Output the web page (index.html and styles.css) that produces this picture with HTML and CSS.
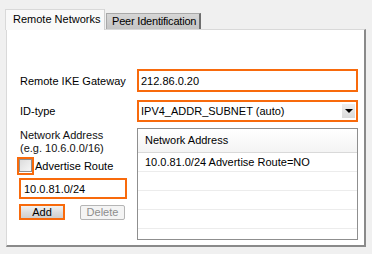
FILE: index.html
```html
<!DOCTYPE html>
<html lang="en">
<head>
  <meta charset="UTF-8" />
  <title>Remote Networks</title>
  <link rel="stylesheet" href="styles.css">
</head>
<body>

  <div class="tabs">
    <div class="tab active">Remote Networks</div>
    <div class="tab">Peer Identification</div>
  </div>

  <div class="panel">
    <div class="form">
      <div class="label">Remote IKE Gateway</div>
      <div class="field hl">212.86.0.20</div>

      <div class="label">ID-type</div>
      <div class="field hl select">
        <span>IPV4_ADDR_SUBNET (auto)</span>
        <span class="arrow"></span>
      </div>

      <div class="side">
        <div class="hint">Network Address<br>(e.g. 10.6.0.0/16)</div>
        <div class="check-row">
          <span class="hl-box"><span class="checkbox"></span></span>
          <span>Advertise Route</span>
        </div>
        <div class="field hl net">10.0.81.0/24</div>
        <div class="buttons">
          <span class="hl-btn"><button class="btn">Add</button></span>
          <button class="btn" disabled>Delete</button>
        </div>
      </div>

      <div class="list">
        <div class="list-head">Network Address</div>
        <div class="list-row">10.0.81.0/24 Advertise Route=NO</div>
        <div class="list-row"></div>
        <div class="list-row"></div>
        <div class="list-row"></div>
      </div>
    </div>
  </div>

</body>
</html>
```

FILE: styles.css
```css
/* Page */
body {
  margin: 0;
  background-color: #f0f0f0;
  font-family: "Liberation Sans", Arial, sans-serif;
  font-size: 11px;
  color: #000;
}

/* Tab strip */
.tabs {
  display: flex;
  align-items: flex-end;
  height: 20px;
  padding: 9px 0 0 5px;
}

.tab {
  box-sizing: border-box;
  height: 16px;
  width: 95px;
  padding-left: 5px;
  line-height: 14px;
  white-space: nowrap;
  letter-spacing: -0.2px;
  background: linear-gradient(#d6d6d6, #c4c4c4);
  border: 1px solid #a8a8a8;
  border-right: 2px solid #6e6e6e;
  border-bottom: none;
  margin-left: 1px;
}

.tab.active {
  position: relative;
  z-index: 1;
  height: 21px;
  width: 100px;
  padding-left: 7px;
  line-height: 19px;
  letter-spacing: 0;
  margin: 0 0 -1px 0;
  background: #f9f9f9;
  border: 1px solid #d9d9d9;
  border-right: 1px solid #d0d0d0;
  border-bottom: none;
}

/* Tab page */
.panel {
  box-sizing: border-box;
  width: 360px;
  height: 218px;
  margin-left: 6px;
  padding: 39px 0 0 13px;
  background-color: #fff;
  border-top: 1px solid #d9d9d9;
  border-left: 1px solid #d9d9d9;
  border-right: 2px solid #8a8a8a;
  border-bottom: 2px solid #8a8a8a;
}

.form {
  display: grid;
  grid-template-columns: 117px 221px;
  grid-template-rows: 23px 22px 112px;
  row-gap: 8px;
  align-items: center;
}

.form .side,
.form .list {
  align-self: start;
  margin-top: -2px;
}

/* Inputs */
.field {
  box-sizing: border-box;
  height: 100%;
  padding-left: 2px;
  display: flex;
  align-items: center;
  background-color: #fff;
}

.hl {
  border: 2px solid #f86a0c;
}

.select {
  justify-content: space-between;
}

.arrow {
  position: relative;
  width: 13px;
  height: 14px;
  margin-right: 1px;
  background: linear-gradient(#eeeeee, #dadada);
}

.arrow::after {
  content: "";
  position: absolute;
  left: 3px;
  top: 5px;
  border-left: 4px solid transparent;
  border-right: 4px solid transparent;
  border-top: 4px solid #000;
}

/* Left column under the fields */
.hint {
  line-height: 13px;
  margin-top: 1px;
  color: #111;
}

.check-row {
  display: flex;
  align-items: center;
  margin: 2px 0 0 -3px;
  height: 17px;
}

.hl-box {
  box-sizing: border-box;
  width: 17px;
  height: 18px;
  border: 2px solid #f86a0c;
  display: flex;
  align-items: center;
  justify-content: center;
  margin-right: 1px;
}

.checkbox {
  box-sizing: border-box;
  width: 13px;
  height: 13px;
  border: 1px solid #8e8f8f;
  background: linear-gradient(135deg, #dcdcdc, #f6f6f6);
}

.net {
  width: 108px;
  height: 21px;
  margin: 4px 0 0 -1px;
  padding-left: 3px;
}

.buttons {
  display: flex;
  align-items: center;
  margin: 5px 0 0 -1px;
}

.hl-btn {
  box-sizing: border-box;
  width: 46px;
  height: 16px;
  border: 2px solid #f86a0c;
  display: flex;
}

.btn {
  box-sizing: border-box;
  width: 45px;
  height: 15px;
  padding: 0;
  font-family: inherit;
  font-size: 11px;
  line-height: 11px;
  color: #000;
  background: linear-gradient(#f2f2f2, #dcdcdc 55%, #cfcfcf);
  border: 1px solid #a0a0a0;
  border-radius: 2px;
}

.hl-btn .btn {
  width: 100%;
  height: 100%;
  border: none;
  border-radius: 0;
}

.btn[disabled] {
  margin-left: 15px;
  color: #8d8d8d;
  background: #f4f4f4;
  border-color: #b5b5b5;
}

/* List view */
.list {
  box-sizing: border-box;
  height: 112px;
  border: 1px solid #8f8f8f;
  background-color: #fff;
}

.list-head {
  height: 23px;
  line-height: 23px;
  padding-left: 7px;
  background: linear-gradient(#ffffff, #f4f4f4);
  border-bottom: 1px solid #d9d9d9;
}

.list-row {
  height: 18px;
  line-height: 18px;
  padding-left: 7px;
  border-bottom: 1px solid #ececec;
}
```
